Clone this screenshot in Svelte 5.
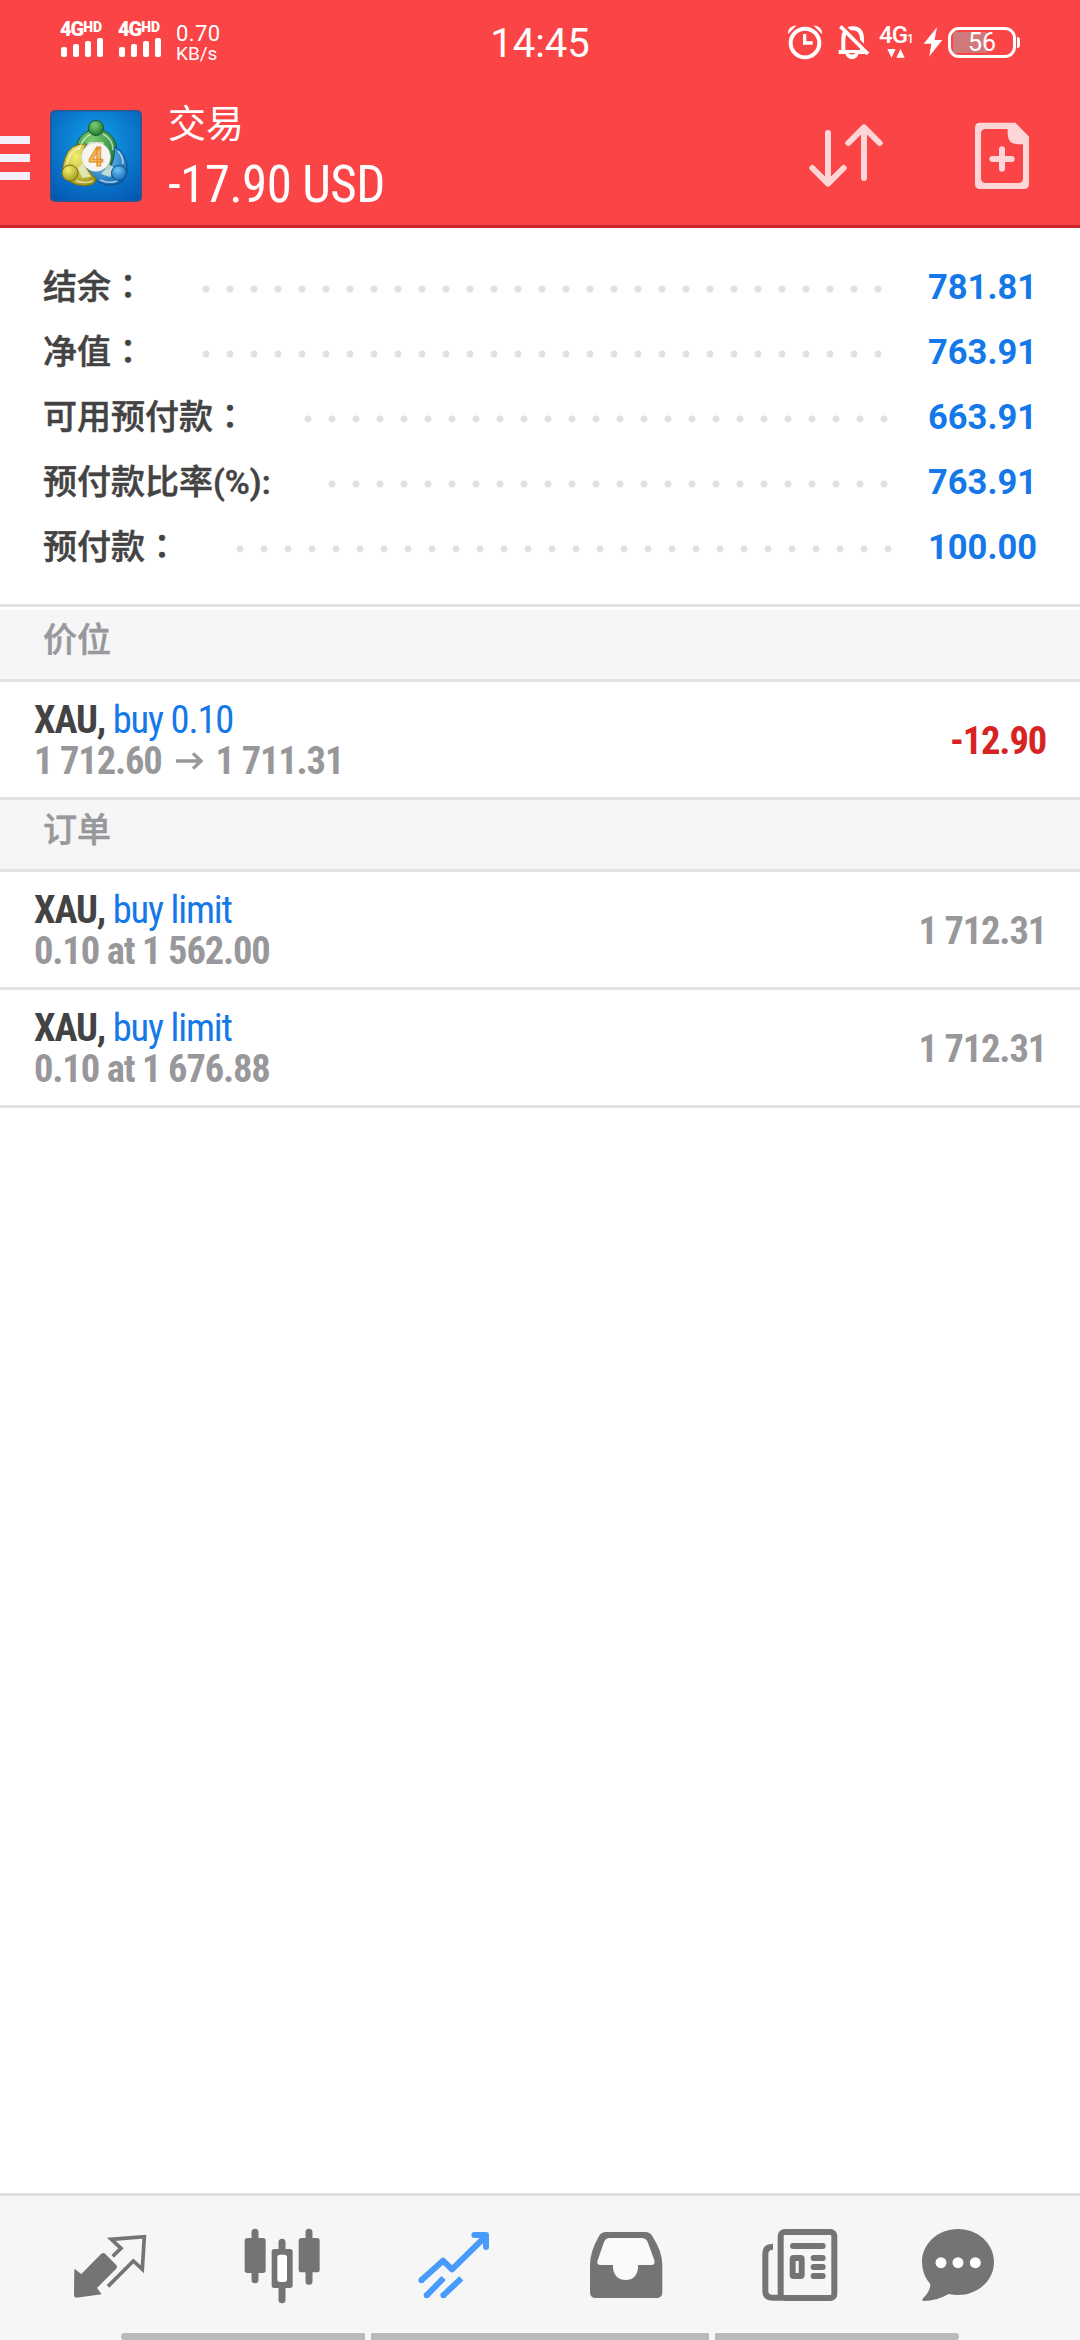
<script>
	const account = [
		{ label: "结余", suffix: "：", value: "781.81", dots: 29 },
		{ label: "净值", suffix: "：", value: "763.91", dots: 29 },
		{ label: "可用预付款", suffix: "：", value: "663.91", dots: 25 },
		{ label: "预付款比率", suffix: "(%):", value: "763.91", dots: 24 },
		{ label: "预付款", suffix: "：", value: "100.00", dots: 28 },
	];

	const sections = [
		{
			title: "价位",
			rows: [
				{ symbol: "XAU,", action: "buy 0.10", from: "1 712.60", to: "1 711.31", value: "-12.90", loss: true },
			],
		},
		{
			title: "订单",
			rows: [
				{ symbol: "XAU,", action: "buy limit", from: "0.10 at 1 562.00", value: "1 712.31" },
				{ symbol: "XAU,", action: "buy limit", from: "0.10 at 1 676.88", value: "1 712.31" },
			],
		},
	];

	const bars = [10, 13, 16, 19];
	const DOT_PITCH = 24;
</script>

<div class="screen">
	<header>
		<div class="status">
			<div class="left">
				{#each [0, 1] as sim (sim)}
					<div class="sim">
						<div class="net">4G<small>HD</small></div>
						<div class="bars">
							{#each bars as h (h)}
								<i style="height: {h}px"></i>
							{/each}
						</div>
					</div>
				{/each}
				<div class="speed">
					<span class="rate">0.70</span>
					<span class="unit">KB/s</span>
				</div>
			</div>
			<div class="time">14:45</div>
			<div class="right">
				<svg class="alarm" viewBox="81 72 108 108" width="36" height="36">
					<circle cx="135" cy="129" r="43" fill="none" stroke="#fff" stroke-width="12" />
					<path d="M134 102v27h24" fill="none" stroke="#fff" stroke-width="10" />
					<path d="M84 103q-2-24 26-27M186 103q2-24-26-27" fill="#fff" />
				</svg>
				<svg class="bell" viewBox="231 72 99 108" width="33" height="36">
					<path d="M250 153V118q0-33 28-33t28 33v35M236 156h88" fill="none" stroke="#fff" stroke-width="12" />
					<path d="M255 158q6 19 21 19t21-19z" fill="#fff" />
					<path d="M266 159q10 9 20 0z" fill="#fa4446" />
					<path d="M248 74l82 82" stroke="#fa4446" stroke-width="10" />
					<path d="M241 79l83 83" stroke="#fff" stroke-width="11" />
				</svg>
				<div class="data">
					<div class="net">4G<sub>1</sub></div>
					<svg viewBox="0 0 54 28" width="18" height="9">
						<path d="M0 0h26l-13 27zM28 27h26L41 0z" fill="#fff" />
					</svg>
				</div>
				<svg class="bolt" viewBox="489 81 60 90" width="20" height="30">
					<path d="M531 82l-40 49h23l-6 38 39-49h-23z" fill="#fff" />
				</svg>
				<div class="battery"><span>56</span></div>
			</div>
		</div>

		<div class="toolbar">
			<div class="menu"><i></i><i></i><i></i></div>
			<svg class="logo" viewBox="0 0 92 92" width="92" height="92">
				<defs>
					<radialGradient id="sky" cx=".5" cy=".35" r=".75">
						<stop offset="0" stop-color="#12a0ea" />
						<stop offset="1" stop-color="#0459b4" />
					</radialGradient>
					<radialGradient id="green" cx=".4" cy=".3" r=".8">
						<stop offset="0" stop-color="#7fce72" />
						<stop offset="1" stop-color="#157029" />
					</radialGradient>
					<radialGradient id="gold" cx=".4" cy=".3" r=".8">
						<stop offset="0" stop-color="#f4ee70" />
						<stop offset="1" stop-color="#9c9413" />
					</radialGradient>
					<radialGradient id="blue" cx=".4" cy=".3" r=".8">
						<stop offset="0" stop-color="#72c5f5" />
						<stop offset="1" stop-color="#0c62ac" />
					</radialGradient>
				</defs>
				<rect x=".8" y=".8" width="90.4" height="90.4" rx="4" fill="url(#sky)" stroke="#31558f" stroke-width="1.6" />
				<!-- three figures linked arm in arm around the badge -->
				<path d="M25 50C24 30 33 20 46 19C60 20 68 30 67 46Q66 52 60 58L34 46Q27 44 25 50z" fill="url(#green)" stroke="#125a2c" />
				<path d="M64 37Q76 42 77 57Q78 70 68 74Q55 78 44 69L37 58L58 60Q66 50 64 37z" fill="url(#blue)" stroke="#0c5089" />
				<path d="M36 34Q20 33 15 48Q10 62 16 68Q25 78 41 75Q46 73 46 69L36 58Q30 46 36 34z" fill="url(#gold)" stroke="#6f6c1f" />
				<path d="M29 40q4-13 12-16M17 56q1-14 13-19M26 71q9 3 17 0M50 70q12 5 20-1M73 54q0-8-5-13M63 40q0-11-10-16" fill="none" stroke="#fff" stroke-opacity=".6" stroke-width="1.6" />
				<path d="M39 32h14l3 6H36zM28 58l5-5 8 14-9 1zM59 54l6 5-5 8-9-3z" fill="#e9f3d8" fill-opacity=".75" />
				<circle cx="46" cy="18" r="7.5" fill="url(#green)" stroke="#125a2c" />
				<circle cx="20" cy="63" r="8" fill="url(#gold)" stroke="#77731c" />
				<circle cx="69" cy="63" r="7.5" fill="url(#blue)" stroke="#0c5089" />
				<circle cx="46" cy="47" r="14.6" fill="#f6f5f1" stroke="#bbb" stroke-width=".5" />
				<text x="46" y="56" text-anchor="middle" class="four">4</text>
			</svg>
			<div class="title">
				<div class="name">交易</div>
				<div class="profit"><span class="cond">-17.90 USD</span></div>
			</div>
			<svg class="sort" viewBox="147 369 222 198" width="74" height="66">
				<path
					d="M204 399v150M157 504l47 47 47-47M312 534V384M265 429l47-47 47 47"
					fill="none"
					stroke="#ffd6d8"
					stroke-width="18"
					stroke-linecap="round"
					stroke-linejoin="round"
				/>
			</svg>
			<svg class="add" viewBox="642 366 168 204" width="56" height="68">
				<path
					fill="#ffd6d8"
					fill-rule="evenodd"
					d="M660 368h106l41 42v142q0 15-15 15H660q-15 0-15-15V383q0-15 15-15zM677 387q-14 0-14 14v134q0 14 14 14h98q14 0 14-14V433h-14q-32 0-32-31v-15z"
				/>
				<path d="M726 448v58M697 477h58" stroke="#ffd6d8" stroke-width="18" stroke-linecap="round" />
			</svg>
		</div>
	</header>

	<main>
		<div class="account">
			{#each account as item (item.label)}
				<div class="line">
					<span class="label">{item.label}<span class="suffix">{item.suffix}</span></span>
					<span class="leader" style="width: {item.dots * DOT_PITCH}px"></span>
					<span class="amount">{item.value}</span>
				</div>
			{/each}
		</div>

		{#each sections as section (section.title)}
			<h2>{section.title}</h2>
			{#each section.rows as row, i (i)}
				<div class="row">
					<div class="info">
						<div class="first"><span class="cond"><b>{row.symbol}</b> {row.action}</span></div>
						<div class="second">
							<span class="cond">{row.from}</span>
							{#if row.to}
								<svg viewBox="0 0 84 54" width="28" height="18">
									<path d="M3 27h74M54 4l24 23-24 23" fill="none" stroke="#98989b" stroke-width="10" />
								</svg>
								<span class="cond">{row.to}</span>
							{/if}
						</div>
					</div>
					<div class="value" class:loss={row.loss}><span class="cond">{row.value}</span></div>
				</div>
			{/each}
		{/each}
	</main>

	<footer>
		<nav>
			<button aria-label="quotes">
				<svg viewBox="120 135 240 240">
					<path d="M133 266l21 16 59-60q7-6 13 0l32 32q6 6 0 13l-57 57 14 19-76 10q-7 0-7-7z" fill="#747474" />
					<path
						d="M248 229l25-24-29-27 99-8-6 98-27-25-76 76"
						fill="none"
						stroke="#747474"
						stroke-width="11"
					/>
				</svg>
			</button>
			<button aria-label="chart">
				<svg viewBox="634 135 240 240">
					<path
						d="M673 157v142M835 157v147M754 187v30M754 315v44"
						stroke="#747474"
						stroke-width="21"
						stroke-linecap="round"
					/>
					<rect x="642" y="174" width="63" height="105" rx="8" fill="#747474" />
					<rect x="804" y="174" width="63" height="103" rx="8" fill="#747474" />
					<rect x="723" y="207" width="63" height="117" rx="8" fill="#747474" />
					<rect x="740" y="224" width="29" height="82" rx="8" fill="#fff" />
				</svg>
			</button>
			<button aria-label="trade">
				<svg viewBox="131 135 240 240">
					<path
						d="M153 301l65-59 27 26 99-97M169 346l51-52M219 346l54-51"
						fill="none"
						stroke="#479bfb"
						stroke-width="18"
						stroke-linejoin="round"
					/>
					<path
						d="M153 301h.1M169 346h.1M219 346h.1M312 165h35v36"
						fill="none"
						stroke="#479bfb"
						stroke-width="18"
						stroke-linecap="round"
						stroke-linejoin="round"
					/>
				</svg>
			</button>
			<button aria-label="history">
				<svg viewBox="650 135 240 240">
					<path
						d="M710 156h118q15 0 22 14 29 45 29 84v82q0 18-18 18H680q-18 0-18-18v-82q0-39 26-84 7-14 22-14z"
						fill="#747474"
					/>
					<path
						d="M722 174h94q14 0 19 12l20 55q4 14-9 14h-40v9q-4 36-37 36t-38-36v-9h-37q-14 0-9-14l19-55q5-12 18-12z"
						fill="#fafafa"
					/>
				</svg>
			</button>
			<button aria-label="news">
				<svg viewBox="114 135 240 240">
					<rect x="182" y="156" width="161" height="198" rx="12" fill="none" stroke="#747474" stroke-width="18" />
					<path d="M159 200q-23 0-23 22v112q0 19 20 19h30" fill="none" stroke="#747474" stroke-width="18" />
					<path
						d="M219 198h89M281 234h27M281 261h27M281 288h27"
						stroke="#747474"
						stroke-width="18"
						stroke-linecap="round"
					/>
					<rect x="218" y="234" width="27" height="54" rx="3" fill="none" stroke="#747474" stroke-width="18" stroke-linejoin="round" />
				</svg>
			</button>
			<button aria-label="messages">
				<svg viewBox="594 135 240 240">
					<path
						d="M714 147c60 0 108 44 108 99s-48 99-108 99q-14 0-28-3-36 21-75 21-7-2-2-8 21-19 22-42-25-29-25-67c0-55 48-99 108-99z"
						fill="#747474"
					/>
					<g fill="#fff">
						<circle cx="663" cy="248" r="16.5" />
						<circle cx="714" cy="248" r="16.5" />
						<circle cx="766" cy="248" r="16.5" />
					</g>
				</svg>
			</button>
		</nav>
		<div class="handles"><i></i><i></i><i></i></div>
	</footer>
</div>

<style>
	:global(body) {
		margin: 0;
		background: #fff;
	}

	.screen {
		width: 1080px;
		height: 2340px;
		display: flex;
		flex-direction: column;
		overflow: hidden;
		background: #fff;
		font-family: Roboto, "Noto Sans CJK SC", sans-serif;
	}

	svg {
		display: block;
		flex: none;
	}

	.cond {
		display: inline-block;
		font-stretch: 75%;
		letter-spacing: -1.15px;
		white-space: pre;
	}

	header {
		height: 225px;
		flex: none;
		background: #fa4446;
		border-bottom: 3px solid #cb242b;
		color: #fff;
	}

	.status {
		height: 86px;
		padding: 0 60px;
		display: grid;
		grid-template-columns: 1fr auto 1fr;
	}

	.left,
	.right {
		display: flex;
		align-items: flex-start;
	}

	.right {
		justify-content: flex-end;
	}

	.sim {
		width: 58px;
		padding-top: 22px;
	}

	.net {
		display: flex;
		font-size: 20px;
		line-height: 15px;
		font-weight: 900;
		letter-spacing: -1px;
	}

	.net small {
		font-size: 14px;
		line-height: 10px;
		letter-spacing: 0;
	}

	.bars {
		display: flex;
		align-items: flex-end;
		gap: 6px;
		height: 20px;
		padding-left: 1px;
	}

	.bars i {
		width: 6px;
		border-radius: 2px;
		background: #fff;
	}

	.speed {
		display: flex;
		flex-direction: column;
		padding-top: 24px;
	}

	.rate {
		font-size: 22px;
		line-height: 20px;
		letter-spacing: 0.4px;
	}

	.unit {
		font-size: 19px;
		line-height: 19px;
	}

	.time {
		padding-top: 20px;
		font-size: 40px;
		line-height: 47px;
	}

	.alarm {
		margin-top: 24px;
	}

	.bell {
		margin: 24px 0 0 14px;
	}

	.data {
		width: 35px;
		margin: 26px 0 0 9px;
	}

	.data .net {
		height: 18px;
		font-size: 24px;
		line-height: 18px;
		font-weight: 500;
		margin-bottom: 5px;
	}

	.data sub {
		font-size: 12px;
		line-height: 26px;
	}

	.data svg {
		margin-left: 8px;
	}

	.bolt {
		margin: 27px 0 0 9px;
	}

	.battery {
		position: relative;
		box-sizing: border-box;
		width: 68px;
		height: 31px;
		margin: 27px 4px 0 5px;
		border: 3px solid #fff;
		border-radius: 11px;
		background: linear-gradient(#cf797a, #cf797a) 2px 2px / 34px 21px no-repeat;
		text-align: center;
		font-size: 25px;
		line-height: 25px;
	}

	.battery::after {
		content: "";
		position: absolute;
		right: -7px;
		top: 7px;
		width: 3px;
		height: 11px;
		border-radius: 0 4px 4px 0;
		background: #fff;
	}

	.toolbar {
		display: flex;
		align-items: flex-start;
	}

	.menu {
		width: 30px;
		padding-top: 50px;
		display: flex;
		flex-direction: column;
		gap: 10px;
	}

	.menu i {
		height: 8px;
		background: #f4effa;
	}

	.logo {
		margin: 24px 0 0 20px;
	}

	.four {
		font: bold 26px Roboto, sans-serif;
		fill: #f6bd63;
		stroke: #e28a25;
		stroke-width: 1;
	}

	.title {
		width: 641px;
		margin-left: 26px;
	}

	.name {
		padding-top: 10px;
		font-size: 38px;
		line-height: 56px;
	}

	.profit {
		padding-top: 3px;
		font-size: 51px;
		line-height: 60px;
	}

	.profit .cond {
		letter-spacing: -0.6px;
	}

	.sort {
		margin-top: 37px;
	}

	.add {
		margin: 36px 0 0 91px;
	}

	main {
		flex: 1;
	}

	.account {
		height: 350px;
		padding: 26px 43px 0;
		border-bottom: 3px solid #e3e3e3;
	}

	.line {
		display: flex;
		align-items: center;
		height: 65px;
	}

	.label {
		font-size: 34px;
		line-height: 50px;
		font-weight: 500;
		color: #434343;
		-webkit-text-stroke: 0.5px #434343;
	}

	/* the TC face centres the full-width colon in its cell */
	.suffix {
		font-family: Roboto, "Noto Sans CJK TC", sans-serif;
	}

	.leader {
		flex: none;
		height: 8px;
		margin: 5px 0 0 49px;
		background: radial-gradient(circle, #e1e1e1 3px, transparent 4px) 0 0 / 24px 8px repeat-x;
	}

	.amount {
		margin-left: auto;
		font-size: 34.5px;
		font-weight: 700;
		color: #1478e8;
	}

	h2 {
		height: 69px;
		box-sizing: border-box;
		margin: 0;
		padding: 5px 43px;
		border-bottom: 3px solid #e3e3e3;
		background: #f6f6f6;
		font-size: 34px;
		line-height: 50px;
		font-weight: 500;
		color: #98989b;
		-webkit-text-stroke: 0.5px #98989b;
	}

	.account + h2 {
		height: 75px;
		border-top: 3px solid #fff;
	}

	h2:not(.account + h2) {
		height: 72px;
	}

	.row {
		height: 115px;
		display: flex;
		justify-content: space-between;
		border-bottom: 3px solid #e3e3e3;
		padding: 0 34px;
		font-size: 38.5px;
		color: #98989b;
		font-weight: 700;
	}

	.info {
		padding-top: 17px;
	}

	.first {
		line-height: 41px;
		font-weight: 400;
		color: #1478e8;
	}

	.first b {
		color: #434343;
	}

	.second {
		display: flex;
		align-items: center;
		gap: 13px;
		line-height: 41px;
	}

	.value {
		line-height: 118px;
	}

	.loss {
		color: #d62323;
	}

	footer {
		flex: none;
		height: 144px;
		display: flex;
		flex-direction: column;
		border-top: 3px solid #e0e0e0;
		background: #f6f6f6;
	}

	nav {
		flex: 1;
		display: flex;
		padding-left: 24px;
	}

	button {
		width: 172px;
		padding: 29px 0 0;
		border: 0;
		background: none;
		display: flex;
		justify-content: center;
		align-items: flex-start;
	}

	button:last-child {
		width: 148px;
	}

	button svg {
		width: 80px;
		height: 80px;
	}

	.handles {
		display: flex;
		gap: 6px;
		height: 7px;
		padding: 0 121px;
	}

	.handles i {
		flex: 0 0 244px;
		background: #bababa;
	}

	.handles i:nth-child(2) {
		flex: 1;
	}

	.handles i:first-child {
		border-radius: 4px 0 0 4px;
	}

	.handles i:last-child {
		border-radius: 0 4px 4px 0;
	}
</style>
